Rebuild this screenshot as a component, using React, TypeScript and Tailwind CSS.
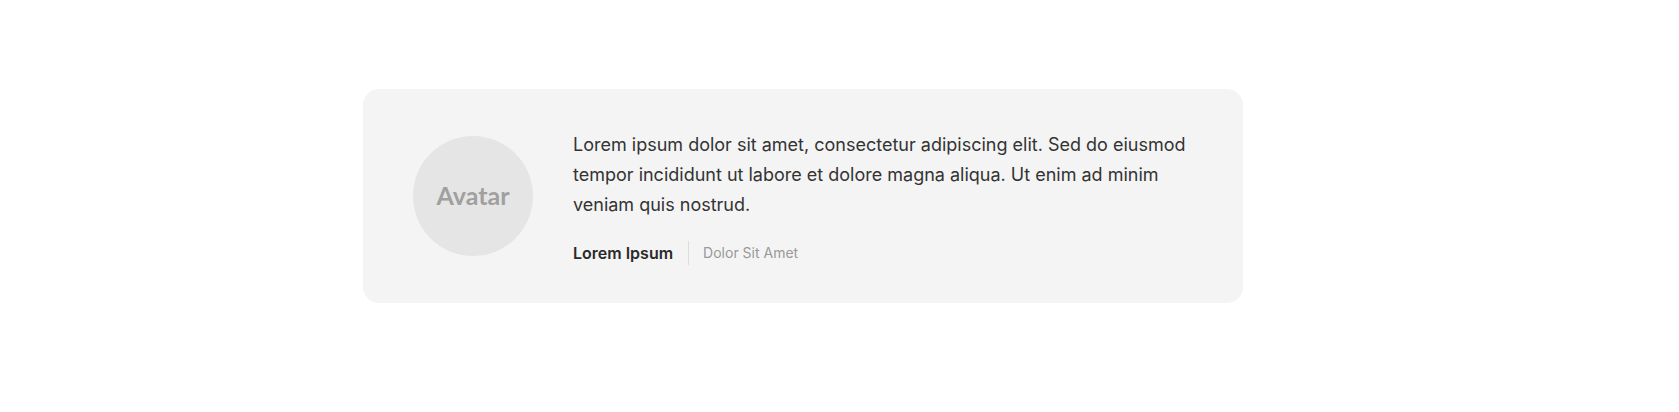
export default function App() {
  return (
    <div className="min-h-screen bg-white pt-[89px] pl-[363px]">
      <div className="w-[880px] h-[214px] bg-[#f4f4f4] rounded-2xl px-[50px] flex items-center gap-10">
        <div className="w-[120px] h-[120px] shrink-0 rounded-full bg-[#e5e5e5] flex items-center justify-center">
          <span className="font-['Lato',sans-serif] font-bold text-[25px] text-[#a0a0a0]">Avatar</span>
        </div>
        <div className="flex-1 font-['Inter',sans-serif] pt-[2px]">
          <p className="text-[18px] leading-[30px] text-[#333]">
            Lorem ipsum dolor sit amet, consectetur adipiscing elit. Sed do eiusmod tempor incididunt ut labore et dolore
            magna aliqua. Ut enim ad minim veniam quis nostrud.
          </p>
          <div className="mt-[21px] flex items-center">
            <span className="text-[16px] leading-6 font-semibold text-[#2a2a2a] pr-[15px] border-r border-[#dddddd]">Lorem Ipsum</span>
            <span className="text-[14px] leading-6 text-[#999] pl-[14px]">Dolor Sit Amet</span>
          </div>
        </div>
      </div>
    </div>
  );
}
